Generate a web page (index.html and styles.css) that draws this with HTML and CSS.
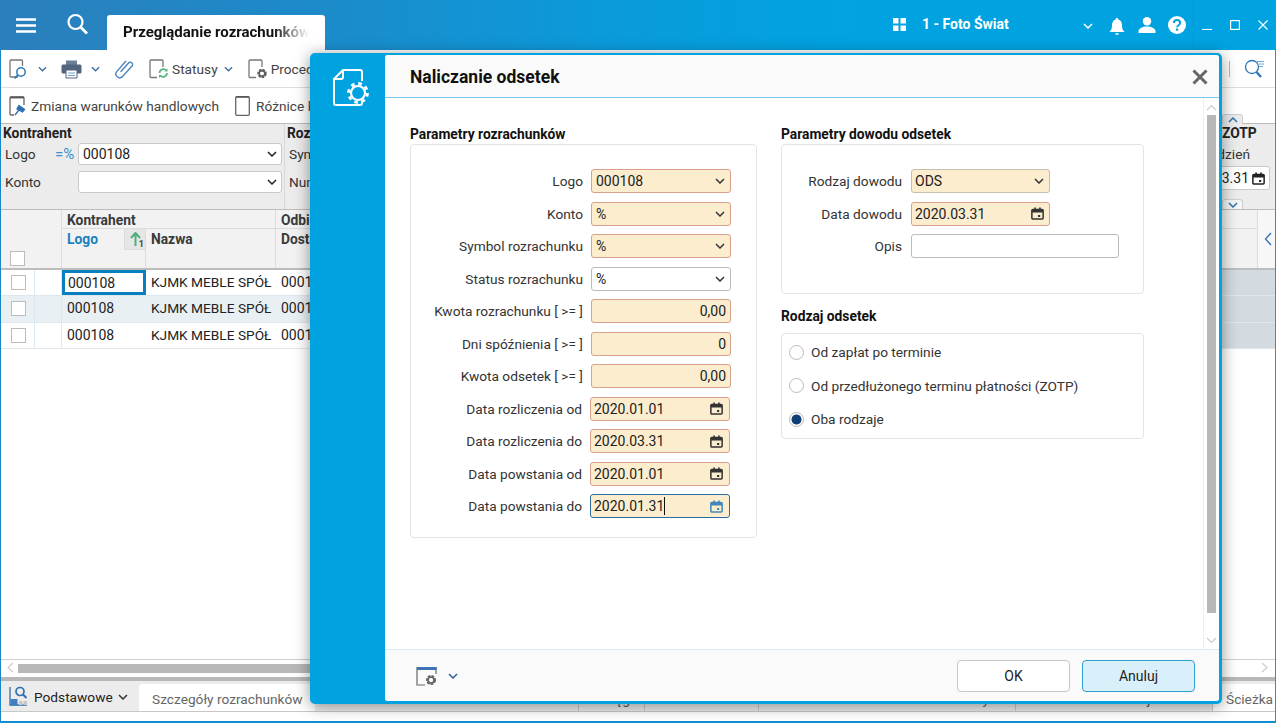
FILE: index.html
```html
<!DOCTYPE html>
<html lang="pl">
<head>
<meta charset="utf-8">
<title>Naliczanie odsetek</title>
<link rel="stylesheet" href="styles.css">
</head>
<body>
<svg class="defs" width="0" height="0">
  <symbol id="chev" viewBox="0 0 10 6"><path d="M1 1l4 4 4-4" fill="none" stroke="currentColor" stroke-width="1.5"/></symbol>
  <symbol id="cal" viewBox="0 0 12 12"><path d="M1.7 2.2h8.6a.9.9 0 0 1 .9.9v7.1a.9.9 0 0 1-.9.9H1.7a.9.9 0 0 1-.9-.9V3.100a.9.9 0 0 1 .9-.9z" fill="none" stroke="currentColor" stroke-width="1.400"/><path d="M1 2.500h10v2.500H1zM3 .5h1.500v2H3zM7.500.5H9v2H7.500zM6.500 7.300h2v2h-2z" fill="currentColor"/></symbol>
</svg>
<div class="app">
  <header class="titlebar">
    <button class="tb-btn tb-menu"><svg width="22" height="15" viewBox="0 0 22 15"><path d="M1 1.500h20M1 7.500h20M1 13.500h20" stroke="#fff" stroke-width="2.400"/></svg></button>
    <button class="tb-btn tb-search"><svg width="24" height="24" viewBox="0 0 24 24"><circle cx="9.500" cy="9" r="7" fill="none" stroke="#fff" stroke-width="2.200"/><path d="M14.500 14l6.500 6.500" stroke="#fff" stroke-width="2.800"/></svg></button>
    <div class="main-tab"><span class="main-tab-text">Przeglądanie rozrachunków</span></div>
    <div class="tb-right">
      <svg class="tb-grid" width="13" height="13" viewBox="0 0 13 13"><path d="M0 0h5.500v5.500H0zM7.500 0H13v5.500H7.500zM0 7.500h5.500V13H0zM7.500 7.500H13V13H7.500z" fill="#fff"/></svg>
      <span class="company">1 - Foto Świat</span>
      <svg class="tb-chev" width="10" height="6"><use href="#chev"/></svg>
      <svg class="tb-bell" width="16" height="18" viewBox="0 0 16 18"><path d="M8 0a1.300 1.300 0 0 1 1.300 1.400C12 2.200 13 4.500 13 7.500c0 3 .7 4.500 2.500 6.500H.5C2.300 12 3 10.500 3 7.500c0-3 1-5.300 3.700-6.100A1.300 1.300 0 0 1 8 0zM6.200 15.200h3.600a1.800 1.800 0 0 1-3.600 0z" fill="#fff"/></svg>
      <svg class="tb-user" width="18" height="16" viewBox="0 0 18 16"><circle cx="9" cy="4.300" r="4.200" fill="#fff"/><path d="M.5 16v-1.500C.5 11 5 9.500 9 9.500s8.500 1.500 8.500 5V16z" fill="#fff"/></svg>
      <svg class="tb-help" width="18" height="18" viewBox="0 0 18 18"><circle cx="9" cy="9" r="9" fill="#fff"/><path d="M5.900 7a3.100 3.100 0 0 1 6.200 0c0 2.200-3 2.200-3 4.300" fill="none" stroke="#00a3e0" stroke-width="2"/><rect x="8" y="12.500" width="2.200" height="2.200" fill="#00a3e0"/></svg>
      <div class="win-ctrls">
        <svg width="10" height="10" viewBox="0 0 10 10"><path d="M0 9.500h10" stroke="#fff" stroke-width="1.200"/></svg>
        <svg width="10" height="10" viewBox="0 0 10 10"><rect x=".6" y=".6" width="8.800" height="8.800" fill="none" stroke="#fff" stroke-width="1.200"/></svg>
        <svg width="10" height="10" viewBox="0 0 10 10"><path d="M.5.500l9 9M9.500.500l-9 9" stroke="#fff" stroke-width="1.100"/></svg>
      </div>
    </div>
  </header>

  <div class="toolbar">
    <svg class="ico" width="19" height="20" viewBox="0 0 19 20"><path d="M9 18H2a1 1 0 0 1-1-1V2a1 1 0 0 1 1-1h10.500a1 1 0 0 1 1 1v5" fill="none" stroke="#777" stroke-width="1.300"/><circle cx="12" cy="13" r="4.200" fill="#fff" stroke="#2d79b8" stroke-width="1.500"/><path d="M9 16l-3.500 3.300" stroke="#2d79b8" stroke-width="1.800"/></svg>
    <svg class="chev-sm gap-a" width="9" height="6"><use href="#chev"/></svg>
    <svg class="ico gap-b" width="21" height="20" viewBox="0 0 21 20"><path d="M5 1.500h11V6H5z" fill="#6d7f96"/><rect x=".5" y="5.500" width="20" height="9" rx="1.500" fill="#53657d"/><path d="M5 11h11v8H5z" fill="#fff" stroke="#53657d"/><path d="M7 14h7M7 16.500h7" stroke="#6ca0cc"/></svg>
    <svg class="chev-sm gap-c" width="9" height="6"><use href="#chev"/></svg>
    <svg class="ico gap-d" width="21" height="21" viewBox="0 0 21 21"><path d="M7 13.500l7.500-8.500a2.300 2.300 0 0 1 3.500 3l-9.500 10.500a3.800 3.800 0 0 1-5.800-4.900l9-10.300a1 1 0 0 0 0 0" fill="none" stroke="#4a86c0" stroke-width="1.400" stroke-linecap="round"/></svg>
    <svg class="ico gap-e" width="20" height="20" viewBox="0 0 20 20"><path d="M8 18.500H2a1 1 0 0 1-1-1V2a1 1 0 0 1 1-1h11a1 1 0 0 1 1 1v6" fill="none" stroke="#777" stroke-width="1.300"/><path d="M10.500 14a4 4 0 0 1 7-2.500M18 14a4 4 0 0 1-7 2.500" fill="none" stroke="#5cb483" stroke-width="1.800"/><path d="M18.500 9.500v3h-3zM10 19v-3h3z" fill="#5cb483"/></svg>
    <span class="tool-text">Statusy</span>
    <svg class="chev-sm gap-f" width="9" height="6"><use href="#chev"/></svg>
    <svg class="ico gap-g" width="20" height="20" viewBox="0 0 20 20"><path d="M8 18.500H2a1 1 0 0 1-1-1V2a1 1 0 0 1 1-1h11a1 1 0 0 1 1 1v6" fill="none" stroke="#777" stroke-width="1.300"/><circle cx="14" cy="14.500" r="3.400" fill="none" stroke="#5d5d5d" stroke-width="2.600" stroke-dasharray="2.300 .9"/><circle cx="14" cy="14.500" r="2.800" fill="none" stroke="#5d5d5d" stroke-width="1.500"/></svg>
    <span class="tool-text">Procedury</span>
    <span class="tool-sep"></span>
    <svg class="ico" width="21" height="20" viewBox="0 0 21 20"><circle cx="8" cy="8" r="6.500" fill="none" stroke="#2d79b8" stroke-width="1.300"/><path d="M12.500 13l4.500 5" stroke="#2d79b8" stroke-width="2.400"/><path d="M13 2.500h7M15 5h5M15 7.500h4" stroke="#74a9d3"/></svg>
  </div>

  <div class="toolbar2">
    <svg class="ico" width="19" height="20" viewBox="0 0 19 20"><path d="M15 9V2a1 1 0 0 0-1-1H2a1 1 0 0 0-1 1v16a1 1 0 0 0 1 1h3" fill="none" stroke="#666" stroke-width="1.300"/><path d="M1 1.500h14" stroke="#555" stroke-width="1.800"/><path d="M10 9.500l5.500 4-2 2.500-5.500-3zM9.500 14.500L6 19" fill="#2f6fb3" stroke="#2f6fb3" stroke-width="1.300"/></svg>
    <span class="tool-text t2a">Zmiana warunków handlowych</span>
    <svg class="ico t2b" width="15" height="20" viewBox="0 0 15 20"><rect x=".7" y=".7" width="13.600" height="18.600" rx="1" fill="#fff" stroke="#666" stroke-width="1.300"/><path d="M1 1h13" stroke="#555" stroke-width="1.500"/></svg>
    <span class="tool-text t2c">Różnice kursowe</span>
  </div>

  <section class="filters">
    <span class="fold fold-up"><svg width="10" height="6"><use href="#chev"/></svg></span>
    <div class="fgroup fg-kontrahent">
      <div class="fg-title">Kontrahent</div>
      <div class="fg-row">
        <span class="fg-label">Logo</span><span class="eq">=%</span>
        <div class="ffield"><span>000108</span><svg width="10" height="6"><use href="#chev"/></svg></div>
      </div>
      <div class="fg-row">
        <span class="fg-label">Konto</span><span class="eq"></span>
        <div class="ffield"><span></span><svg width="10" height="6"><use href="#chev"/></svg></div>
      </div>
    </div>
    <div class="fgroup fg-rozr">
      <div class="fg-title">Rozrachunek</div>
      <div class="fg-row"><span class="fg-label">Symbol</span></div>
      <div class="fg-row"><span class="fg-label">Numer</span></div>
    </div>
    <div class="fgroup fg-zotp">
      <div class="fg-title">ZOTP</div>
      <div class="fg-row zotp-label">Na dzień</div>
      <div class="ffield zotp-date"><span>2020.03.31</span><svg width="13" height="13"><use href="#cal"/></svg></div>
    </div>
    <span class="fold fold-down"><svg width="10" height="6"><use href="#chev"/></svg></span>
  </section>

  <section class="table">
    <div class="thead">
      <div class="th-sel"><span class="chk chk-head"></span></div>
      <div class="th-group">Kontrahent</div>
      <div class="th-group th-odb">Odbiorca</div>
      <div class="th-last"><svg width="8" height="14" viewBox="0 0 8 14"><path d="M7 1L1.500 7 7 13" fill="none" stroke="#2f6fb3" stroke-width="1.300"/></svg></div>
      <div class="th-cell th-logo">Logo<span class="sort"><svg width="11" height="15" viewBox="0 0 11 15"><path d="M5.500 1v13M1 6l4.500-5L10 6" fill="none" stroke="#4fae7d" stroke-width="2"/></svg><i>1</i></span></div>
      <div class="th-cell">Nazwa</div>
      <div class="th-cell th-odb">Dostawca</div>
    </div>
    <div class="trow">
      <div class="c-sel"><span class="chk"></span></div><div class="c-gap"></div>
      <div class="c-logo c-focus">000108</div><div class="c-name">KJMK MEBLE SPÓŁ</div><div class="c-odb">0001</div><div class="c-rest"></div>
    </div>
    <div class="trow trow-alt">
      <div class="c-sel"><span class="chk"></span></div><div class="c-gap"></div>
      <div class="c-logo">000108</div><div class="c-name">KJMK MEBLE SPÓŁ</div><div class="c-odb">0001</div><div class="c-rest"></div>
    </div>
    <div class="trow">
      <div class="c-sel"><span class="chk"></span></div><div class="c-gap"></div>
      <div class="c-logo">000108</div><div class="c-name">KJMK MEBLE SPÓŁ</div><div class="c-odb">0001</div><div class="c-rest"></div>
    </div>
  </section>

  <div class="hscroll">
    <svg width="7" height="11" viewBox="0 0 7 11"><path d="M6 1L1 5.500 6 10" fill="none" stroke="#ccc" stroke-width="1.200"/></svg>
    <span class="hthumb"></span>
    <svg width="7" height="11" viewBox="0 0 7 11"><path d="M1 1l5 4.500L1 10" fill="none" stroke="#ccc" stroke-width="1.200"/></svg>
  </div>

  <footer class="bottom">
    <div class="views">
      <svg width="19" height="20" viewBox="0 0 19 20"><path d="M1 1v18h17" fill="none" stroke="#2f6fb3" stroke-width="1.300"/><path d="M1.500 13h7v6.500h-7z" fill="#3f7ec0"/><path d="M10 15h3.500v4H10zM14.500 15H18v4h-3.500z" fill="#c8c8c8"/><circle cx="11" cy="5.500" r="4" fill="none" stroke="#2f6fb3" stroke-width="1.700"/><path d="M14 8.500l3.500 3.500" stroke="#2f6fb3" stroke-width="2"/></svg>
      <span>Podstawowe</span>
      <svg class="views-chev" width="10" height="6"><use href="#chev"/></svg>
    </div>
    <div class="btab btab-on">Szczegóły rozrachunków</div>
    <div class="btab b1"></div>
    <div class="btab b2">Księgi</div>
    <div class="btab b3"></div>
    <div class="btab b4">Faktury</div>
    <div class="btab b5">Rozliczaj</div>
    <div class="btab btab-on b6">Ścieżka</div>
  </footer>
</div>

<div class="dialog">
  <aside class="dlg-side">
    <svg width="38" height="40" viewBox="0 0 38 40"><path d="M16 37H4a2 2 0 0 1-2-2V11L11 2h17a2 2 0 0 1 2 2v9M2 11h7a2 2 0 0 0 2-2V2M30 33v2a2 2 0 0 1-2 2H16" fill="none" stroke="#fff" stroke-width="2"/><circle cx="26" cy="25" r="7" fill="#00a3e0" stroke="#fff" stroke-width="2.200"/><circle cx="26" cy="25" r="9.400" fill="none" stroke="#fff" stroke-width="3" stroke-dasharray="3.600 3.780"/></svg>
  </aside>
  <div class="dlg-main">
    <div class="dlg-head">
      <h1>Naliczanie odsetek</h1>
      <svg class="dlg-close" width="16" height="16" viewBox="0 0 16 16"><path d="M1.500 1.500l13 13M14.500 1.500l-13 13" stroke="#666" stroke-width="3"/></svg>
    </div>
    <div class="dlg-body">
      <div class="dlg-content">
        <div class="col-left">
          <h2>Parametry rozrachunków</h2>
          <div class="box box-params">
            <label>Logo</label><div class="field req"><span>000108</span><svg width="10" height="6"><use href="#chev"/></svg></div>
            <label>Konto</label><div class="field req"><span>%</span><svg width="10" height="6"><use href="#chev"/></svg></div>
            <label>Symbol rozrachunku</label><div class="field req"><span>%</span><svg width="10" height="6"><use href="#chev"/></svg></div>
            <label>Status rozrachunku</label><div class="field plain"><span>%</span><svg width="10" height="6"><use href="#chev"/></svg></div>
            <label>Kwota rozrachunku [ &gt;= ]</label><div class="field req num"><span>0,00</span></div>
            <label>Dni spóźnienia [ &gt;= ]</label><div class="field req num"><span>0</span></div>
            <label>Kwota odsetek [ &gt;= ]</label><div class="field req num"><span>0,00</span></div>
            <label class="lbl-date">Data rozliczenia od</label><div class="field req date"><span>2020.01.01</span><svg width="13" height="13"><use href="#cal"/></svg></div>
            <label class="lbl-date">Data rozliczenia do</label><div class="field req date"><span>2020.03.31</span><svg width="13" height="13"><use href="#cal"/></svg></div>
            <label class="lbl-date">Data powstania od</label><div class="field req date"><span>2020.01.01</span><svg width="13" height="13"><use href="#cal"/></svg></div>
            <label class="lbl-date">Data powstania do</label><div class="field req date focus"><span class="caret">2020.01.31</span><svg width="13" height="13"><use href="#cal"/></svg></div>
          </div>
        </div>
        <div class="col-right">
          <h2>Parametry dowodu odsetek</h2>
          <div class="box box-proof">
            <label>Rodzaj dowodu</label><div class="field soft short"><span>ODS</span><svg width="10" height="6"><use href="#chev"/></svg></div>
            <label>Data dowodu</label><div class="field req short"><span>2020.03.31</span><svg width="13" height="13"><use href="#cal"/></svg></div>
            <label>Opis</label><div class="field plain wide"></div>
          </div>
          <h2 class="h2-second">Rodzaj odsetek</h2>
          <div class="box box-radios">
            <div class="radio-row"><span class="radio"></span>Od zapłat po terminie</div>
            <div class="radio-row"><span class="radio"></span>Od przedłużonego terminu płatności (ZOTP)</div>
            <div class="radio-row"><span class="radio radio-on"></span>Oba rodzaje</div>
          </div>
        </div>
      </div>
      <div class="vscroll">
        <svg width="11" height="7" viewBox="0 0 11 7"><path d="M1 6l4.500-4.500L10 6" fill="none" stroke="#ccc" stroke-width="1.200"/></svg>
        <span class="vthumb"></span>
        <svg width="11" height="7" viewBox="0 0 11 7"><path d="M1 1l4.500 4.500L10 1" fill="none" stroke="#ccc" stroke-width="1.200"/></svg>
      </div>
    </div>
    <div class="dlg-foot">
      <svg class="foot-ico" width="22" height="20" viewBox="0 0 22 20"><path d="M20 8V1.500H1V19h8" fill="none" stroke="#666" stroke-width="1.200"/><path d="M1 1h19.500v3H1z" fill="#3c74b4"/><circle cx="15" cy="14" r="3.600" fill="none" stroke="#666" stroke-width="2.800" stroke-dasharray="2.400 1"/><circle cx="15" cy="14" r="3" fill="none" stroke="#666" stroke-width="1.600"/></svg>
      <svg class="foot-chev" width="10" height="6"><use href="#chev"/></svg>
      <button class="btn">OK</button>
      <button class="btn btn-active">Anuluj</button>
    </div>
  </div>
</div>
</body>
</html>
```

FILE: styles.css
```css
* { box-sizing: border-box; }
html, body { margin: 0; padding: 0; }
body {
  width: 1276px;
  height: 723px;
  overflow: hidden;
  position: relative;
  background: #fff;
  font: 13.7px/16px Roboto, "Liberation Sans", sans-serif;
  color: #222;
}
.defs { position: absolute; }
svg { display: block; flex: none; }
button { font: inherit; padding: 0; border: 0; background: none; }

.app {
  height: 723px;
  display: flex;
  flex-direction: column;
  border-left: 1px solid #1a86c8;
  border-right: 1px solid #00a3e0;
  border-bottom: 2px solid #0f8fd0;
}

/* Title bar */
.titlebar {
  height: 50px;
  flex: none;
  display: flex;
  align-items: flex-end;
  margin-left: -1px;
  margin-right: -1px;
  background: linear-gradient(90deg, #2b7fbc 0, #1c8bca 320px, #0a9bdc 620px, #00a3e0 860px);
}
.tb-btn { height: 50px; display: flex; align-items: center; flex: none; }
.tb-menu { width: 53px; padding-left: 15px; }
.tb-search { width: 54px; padding-left: 13px; }
.main-tab {
  flex: none;
  width: 218px;
  height: 35px;
  background: #fff;
  border-radius: 3px 3px 0 0;
  padding: 9px 0 0 16px;
  font-size: 15px;
  font-weight: 700;
  color: #111;
}
.main-tab-text {
  display: block;
  width: 186px;
  white-space: nowrap;
  overflow: hidden;
  -webkit-mask-image: linear-gradient(90deg, #000 150px, transparent 186px);
  mask-image: linear-gradient(90deg, #000 150px, transparent 186px);
}
.tb-right { flex: 1; height: 50px; display: flex; align-items: center; padding-left: 568px; color: #fff; }
.tb-grid { margin-bottom: 1px; }
.company { margin-left: 16px; width: 161px; padding-bottom: 2px; font-size: 14px; font-weight: 700; white-space: nowrap; }
.tb-bell { margin-left: 16px; margin-top: 4px; }
.tb-user { margin-left: 13px; }
.tb-help { margin-left: 12px; }
.tb-chev { margin-top: 2px; }
.win-ctrls {
  margin-left: 7px;
  height: 50px;
  flex: 1;
  display: flex;
  align-items: center;
  gap: 18px;
  padding-left: 8px;
  padding-bottom: 1px;
  border-left: 1px solid #0a95cf;
}

/* Toolbars */
.toolbar, .toolbar2 { flex: none; display: flex; align-items: center; border-bottom: 1px solid #dfdfdf; color: #444; }
.toolbar { height: 38px; padding-left: 8px; }
.toolbar2 { height: 36px; padding-left: 8px; border-bottom-color: #bdbdbd; }
.chev-sm { color: #3c6f9f; }
.gap-a { margin-left: 10px; }
.gap-b { margin-left: 14px; }
.gap-c { margin-left: 9px; }
.gap-d { margin-left: 14px; }
.gap-e { margin-left: 14px; }
.tool-text { margin-left: 3px; white-space: nowrap; }
.gap-f { margin-left: 6px; }
.gap-g { margin-left: 15px; }
.tool-sep { width: 1px; height: 16px; background: #bbb; margin-left: auto; margin-right: 14px; }
.toolbar > .ico:last-child { margin-right: 10px; }
.t2a { margin-left: 3px; width: 204px; }
.t2c { margin-left: 6px; }

/* Filters */
.filters {
  position: relative;
  flex: none;
  height: 86px;
  display: flex;
  background: #ececec;
  border-bottom: 1px solid #bdbdbd;
}
.fgroup { display: flex; flex-direction: column; }
.fg-kontrahent { width: 284px; border-right: 1px solid #d8d8d8; padding: 1px 2px 0 2px; }
.fg-rozr { padding: 1px 0 0 2px; }
.fg-zotp { margin-left: auto; width: 118px; padding: 1px 5px 0 0; align-items: flex-end; }
.fg-title { font-size: 13.8px; font-weight: 700; color: #222; height: 15px; width: 100%; }
.fg-zotp .fg-title { padding-left: 65px; }
.fg-row { display: flex; align-items: center; height: 24px; margin-top: 2px; margin-bottom: 2px; }
.fg-label { width: 52px; padding-left: 2px; color: #333; }
.eq { width: 23px; color: #3792cf; font-size: 15px; }
.ffield {
  flex: 1;
  height: 22px;
  display: flex;
  align-items: center;
  justify-content: space-between;
  background: #fff;
  border: 1px solid #c9c9c9;
  border-radius: 3px;
  padding: 0 4px;
  font-size: 14px;
}
.zotp-label { width: 100%; justify-content: flex-end; padding-right: 20px; margin-bottom: 0; color: #333; }
.zotp-date { flex: none; width: 110px; height: 24px; justify-content: flex-end; gap: 3px; }
.fold {
  position: absolute;
  left: 1221px;
  width: 21px;
  height: 10px;
  display: flex;
  justify-content: center;
  align-items: center;
  color: #2f6fb3;
  background: #ececec;
  border: 1px solid #d0d0d0;
  border-radius: 3px 3px 0 0;
  border-bottom: 0;
}
.fold-up { top: -10px; }
.fold-up svg { transform: rotate(180deg); }
.fold-down { bottom: 0; background: #f5f5f5; }

/* Table */
.table { flex: 1; }
.thead {
  display: grid;
  grid-template-columns: 61px 84px 130px 1fr 18px;
  grid-template-rows: 19px 39px;
  height: 60px;
  background: #f2f2f2;
  border-bottom: 2px solid #bdbdbd;
  font-size: 13.8px;
  font-weight: 700;
  color: #3a3a3a;
}
.th-sel { grid-column: 1; grid-row: 1 / 3; display: flex; align-items: flex-end; padding: 0 0 2px 9px; border-right: 1px solid #dcdcdc; }
.th-group { grid-column: span 2; padding: 2px 0 0 5px; border-right: 1px solid #dcdcdc; border-bottom: 1px solid #dcdcdc; }
.th-group.th-odb { grid-column: 4; border-right: 0; }
.th-last { grid-column: 5; grid-row: 1 / 3; display: flex; align-items: center; padding: 0 0 0 6px; border-left: 1px solid #dcdcdc; background: #f7f7f7; }
.th-cell { position: relative; padding: 2px 0 0 5px; border-right: 1px solid #dcdcdc; }
.th-logo { color: #1b81bd; }
.th-cell.th-odb { border-right: 0; }
.sort {
  position: absolute;
  right: 0;
  top: 0;
  width: 21px;
  height: 21px;
  background: #e6e6e6;
  border: 1px solid #dcdcdc;
  border-top: 0;
  border-right: 0;
  padding: 3px 0 0 5px;
}
.sort i { position: absolute; right: 1px; bottom: 0; font: 700 9px/9px Roboto, sans-serif; color: #444; }
.chk { display: block; width: 15px; height: 15px; background: #fff; border: 1px solid #bcbcbc; }
.trow { display: grid; grid-template-columns: 34px 27px 84px 130px 110px 1fr; height: 26.3px; border-bottom: 1px solid #dfe7ee; }
.trow-alt > div { background: #e9f0f4; }
.trow > div { line-height: 25px; white-space: nowrap; overflow: hidden; }
.c-sel { padding: 5px 0 0 10px; border-right: 1px solid #dce8f2; }
.c-gap { border-right: 1px solid #dce8f2; }
.trow > .c-logo { padding-left: 5px; font-size: 14px; }
.c-name { padding-left: 5px; }
.c-odb { padding-left: 5px; font-size: 14px; }
.trow > .c-rest { background: #d3dbe1; }
.trow > .c-focus { border: 3px solid #0a7fbf; padding-left: 3px; line-height: 20px; }

/* Horizontal scroll */
.hscroll { flex: none; height: 18px; border-top: 1px solid #cfcfcf; display: flex; align-items: center; gap: 4px; padding: 0 7px 4px 6px; }
.hthumb { flex: 1; height: 9px; background: #b8b8b8; margin-right: 44px; margin-top: 4px; }
.hscroll svg { margin-top: 1px; }

/* Bottom tabs */
.bottom {
  flex: none;
  height: 35px;
  display: flex;
  align-items: flex-end;
  background: #ececec;
  border-top: 4px solid #b8b8b8;
  border-bottom: 1px solid #c8c8c8;
  margin-bottom: 9px;
}
.views { width: 138px; height: 31px; display: flex; align-items: center; padding: 2px 0 0 8px; }
.views svg:first-child { margin-top: -1px; }
.views span { margin-left: 6px; white-space: nowrap; color: #222; }
.views-chev { margin-left: 5px; color: #333; }
.btab { height: 27px; padding-top: 7px; color: #555; border-right: 1px solid #c8c8c8; white-space: nowrap; overflow: hidden; }
.btab-on { background: #fff; color: #666; width: 176px; padding-left: 13px; border-right: 0; border-radius: 3px 3px 0 0; }
.b1 { width: 264px; }
.b2 { width: 66px; padding-left: 17px; }
.b3 { width: 114px; }
.b4 { width: 257px; text-align: right; padding-right: 26px; }
.b5 { width: 197px; padding-left: 80px; }
.b6 { flex: 1; width: auto; padding-left: 13px; border-radius: 0; }

/* Dialog */
.dialog {
  position: absolute;
  left: 310px;
  top: 53px;
  width: 912px;
  height: 651px;
  display: flex;
  background: #00a3e0;
  border-radius: 5px;
  padding: 2px 3px 3px 0;
  box-shadow: 0 2px 16px rgba(0, 0, 0, .42);
}
.dlg-side { width: 75px; flex: none; padding: 13px 0 0 22px; }
.dlg-main { flex: 1; display: flex; flex-direction: column; background: #fff; border-radius: 3px; overflow: hidden; }
.dlg-head {
  height: 43px;
  flex: none;
  display: flex;
  align-items: center;
  justify-content: space-between;
  padding: 2px 11px 0 25px;
  background: #fafafa;
  border-bottom: 1px solid #7cc8e8;
}
h1 { margin: 0; font-size: 17.5px; line-height: 22px; font-weight: 700; color: #111; }
.dlg-body { flex: 1; display: flex; min-height: 0; }
.dlg-content { flex: 1; display: flex; gap: 24px; padding: 28px 0 0 25px; }
h2 { margin: 0 0 2px; font-size: 13.8px; line-height: 16px; font-weight: 700; color: #111; }
.h2-second { margin-top: 14px; margin-bottom: 9px; }
.col-left { width: 347px; }
.col-right { width: 363px; }
.box { border: 1px solid #e4e4e4; border-radius: 4px; }
.box-params {
  height: 394px;
  display: grid;
  grid-template-columns: 172px 140px;
  grid-auto-rows: 24px;
  row-gap: 8.5px;
  column-gap: 8px;
  align-items: center;
  padding-top: 24px;
}
.box-proof {
  height: 150px;
  display: grid;
  grid-template-columns: 121px 208px;
  grid-auto-rows: 24px;
  row-gap: 8.5px;
  column-gap: 8px;
  align-items: center;
  padding-top: 24px;
}
.box-proof label { padding-right: 1px; }
label { text-align: right; color: #333; white-space: nowrap; }
.lbl-date { padding-right: 1px; }
.field {
  height: 24px;
  display: flex;
  align-items: center;
  justify-content: space-between;
  border: 1px solid #bbb;
  border-radius: 3px;
  padding: 0 5px 0 4px;
  background: #fff;
  color: #222;
  font-size: 14px;
}
.field svg { color: #333; }
.req { background: #fdedcf; border-color: #d9a08c; }
.soft { background: #fdedcf; border-color: #c4bdb0; }
.plain { background: #fff; }
.num { justify-content: flex-end; padding-right: 4px; }
.date { width: 140px; margin-left: -1px; padding-left: 3px; padding-right: 6px; }
.short { width: 139px; padding-left: 3px; }
.wide { width: 208px; }
.focus { border-color: #2b6d9e; }
.focus svg { color: #3f88b8; }
.caret { border-right: 1px solid #111; line-height: 18px; }
.box-radios { height: 106px; display: flex; flex-direction: column; gap: 17.5px; padding: 10px 0 0 7px; }
.radio-row { display: flex; align-items: center; gap: 7px; height: 16px; color: #333; white-space: nowrap; }
.radio { width: 15px; height: 15px; flex: none; border: 1px solid #bbb; border-radius: 50%; background: #fff; }
.radio-on { background: radial-gradient(circle, #103f78 0, #103f78 4.6px, #fff 5.4px); }
.vscroll { width: 16px; flex: none; border-left: 1px solid #efefef; display: flex; flex-direction: column; align-items: center; padding: 6px 0 5px 0; }
.vthumb { width: 9px; height: 498px; background: #b8b8b8; margin: 4px 0 24px; }

/* Footer */
.dlg-foot {
  height: 52px;
  flex: none;
  display: flex;
  align-items: center;
  padding: 0 24px 0 31px;
  background: #fafafa;
  border-top: 1px solid #d6edf7;
}
.foot-chev { margin-left: 10px; color: #2b5f98; margin-right: auto; }
.btn {
  width: 113px;
  height: 32px;
  background: #fff;
  border: 1px solid #c8c8c8;
  border-radius: 4px;
  color: #222;
  margin-left: 12px;
  margin-top: 1px;
  font-size: 14px;
}
.btn-active { background: #d9f0fa; border-color: #2e9fd0; }
```
